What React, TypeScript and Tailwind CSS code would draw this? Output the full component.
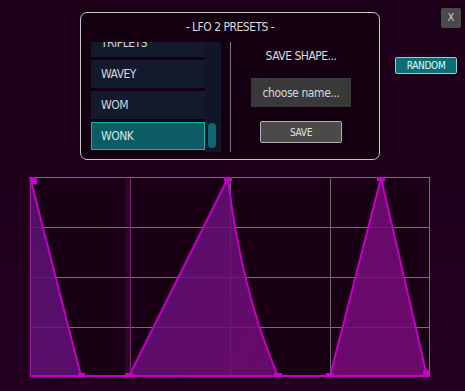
import React from 'react';

const presets = ['TRIPLETS', 'WAVEY', 'WOM', 'WONK'];
const font = { fontFamily: '"DejaVu Sans Condensed", "Liberation Sans Narrow", "Liberation Sans", sans-serif' };

function Graph() {
  const shape =
    'M30 177 L81 376 L129 376 L228 178 Q241 290 278 376 L330 376 L381 178 L427 376';
  return (
    <svg width="403" height="202" viewBox="29 176 403 202" className="block">
      <defs>
        <linearGradient id="fill" x1="0" y1="0" x2="1" y2="0.3">
          <stop offset="0" stopColor="#5a1478" stopOpacity="0.85" />
          <stop offset="1" stopColor="#7a0a7c" stopOpacity="0.85" />
        </linearGradient>
      </defs>
      <rect x="30" y="177" width="400" height="199" fill="#190015" />
      <rect x="125" y="177" width="6" height="199" fill="#2c0628" />
      {[227, 277, 327].map((y) => (
        <line key={y} x1="30" x2="430" y1={y + 0.5} y2={y + 0.5} stroke="#7c6a7c" strokeWidth="1" />
      ))}
      {[230, 330].map((x) => (
        <line key={x} x1={x + 0.5} x2={x + 0.5} y1="177" y2="376" stroke="#6e6270" strokeWidth="1" />
      ))}
      <rect x="30.5" y="177.5" width="399" height="198.5" fill="none" stroke="#7a6e7a" strokeWidth="1" />
      <line x1="130.5" x2="130.5" y1="177" y2="376" stroke="#7a2a72" strokeWidth="1" />
      <path d={shape + ' L430 376 L30 376 Z'} fill="url(#fill)" />
      <line x1="30.5" x2="30.5" y1="177" y2="376" stroke="#a418a4" strokeWidth="1" />
      <line x1="30" x2="430" y1="376" y2="376" stroke="#c400c4" strokeWidth="2" />
      <path d={shape} fill="none" stroke="#c400c4" strokeWidth="2" strokeLinejoin="round" />
      <rect x="30" y="177" width="7" height="7" fill="#cc00cc" />
      <rect x="78" y="373" width="7" height="4" fill="#cc00cc" />
      <rect x="125" y="373" width="8" height="4" fill="#cc00cc" />
      <rect x="224" y="177" width="8" height="4" fill="#cc00cc" />
      <rect x="274" y="373" width="8" height="4" fill="#cc00cc" />
      <rect x="326" y="373" width="8" height="4" fill="#cc00cc" />
      <rect x="377" y="177" width="8" height="4" fill="#cc00cc" />
      <rect x="423" y="370" width="7" height="7" fill="#cc00cc" />
    </svg>
  );
}

export default function App() {
  return (
    <div className="w-[465px] h-[391px] overflow-hidden bg-gradient-to-b from-[#1b0018] to-[#240020] text-[#dcdcdc]" style={font}>
      <div className="flex">
        <div className="w-[80px] shrink-0" />
        <div className="mt-[12px] w-[300px] h-[148px] rounded-[7px] border border-[#c8c8c8] bg-[#150012] flex flex-col">
          <div className="h-[29px] pt-[6px] text-center text-[12px] leading-[16px] tracking-[-0.5px]">- LFO 2 PRESETS -</div>
          <div className="flex pl-[10px]">
            <div className="flex h-[110px] w-[130px] overflow-hidden">
              <div className="flex w-[114px] flex-col justify-end gap-[3px] pb-[2px]">
                {presets.map((p) => (
                  <div
                    key={p}
                    className={
                      p === 'WONK'
                        ? 'h-[28px] shrink-0 border border-[#17b3b3] bg-[#0d5c64] pl-[9px] text-[12px] leading-[26px] tracking-[-0.5px] text-[#cfe6e6]'
                        : 'h-[28px] shrink-0 bg-[#141a2d] pl-[10px] text-[12px] leading-[28px] tracking-[-0.5px] text-[#d4d4dc]'
                    }
                  >
                    {p}
                  </div>
                ))}
              </div>
              <div className="flex w-[16px] flex-col justify-end bg-[#12142a] pb-[4px] pl-[3px]">
                <div className="h-[25px] w-[8px] rounded-full bg-[#0e6870]" />
              </div>
            </div>
            <div className="ml-[9px] h-[110px] w-px bg-[#777]" />
            <div className="flex w-[140px] flex-col items-center">
              <div className="mt-[6px] text-[12px] leading-[16px] tracking-[-0.5px]">SAVE SHAPE...</div>
              <div className="mt-[14px] flex h-[29px] w-[100px] items-center justify-center bg-[#393939] text-[12px] tracking-[-0.4px] text-[#d8d8d8]">
                choose name...
              </div>
              <div className="mt-[14px] flex h-[22px] w-[82px] items-center justify-center rounded-[2px] border border-[#b0b0b0] bg-[#4a4a4a] text-[10px] tracking-[-0.3px] text-[#e0e0e0]">
                SAVE
              </div>
            </div>
          </div>
        </div>
        <div className="flex flex-1 flex-col items-end">
          <div className="mt-[8px] mr-[4px] flex h-[20px] w-[20px] items-center justify-center rounded-[2px] bg-[#4a4a4a] text-[11px] text-[#d0d0d0]">
            X
          </div>
          <div className="mt-[29px] mr-[8px] flex h-[17px] w-[62px] items-center justify-center rounded-[2px] border border-[#a8c8cc] bg-[#0a6f74] text-[10px] tracking-[-0.3px] text-[#e8f4f4]">
            RANDOM
          </div>
        </div>
      </div>
      <div className="mt-[16px] ml-[29px]">
        <Graph />
      </div>
    </div>
  );
}
